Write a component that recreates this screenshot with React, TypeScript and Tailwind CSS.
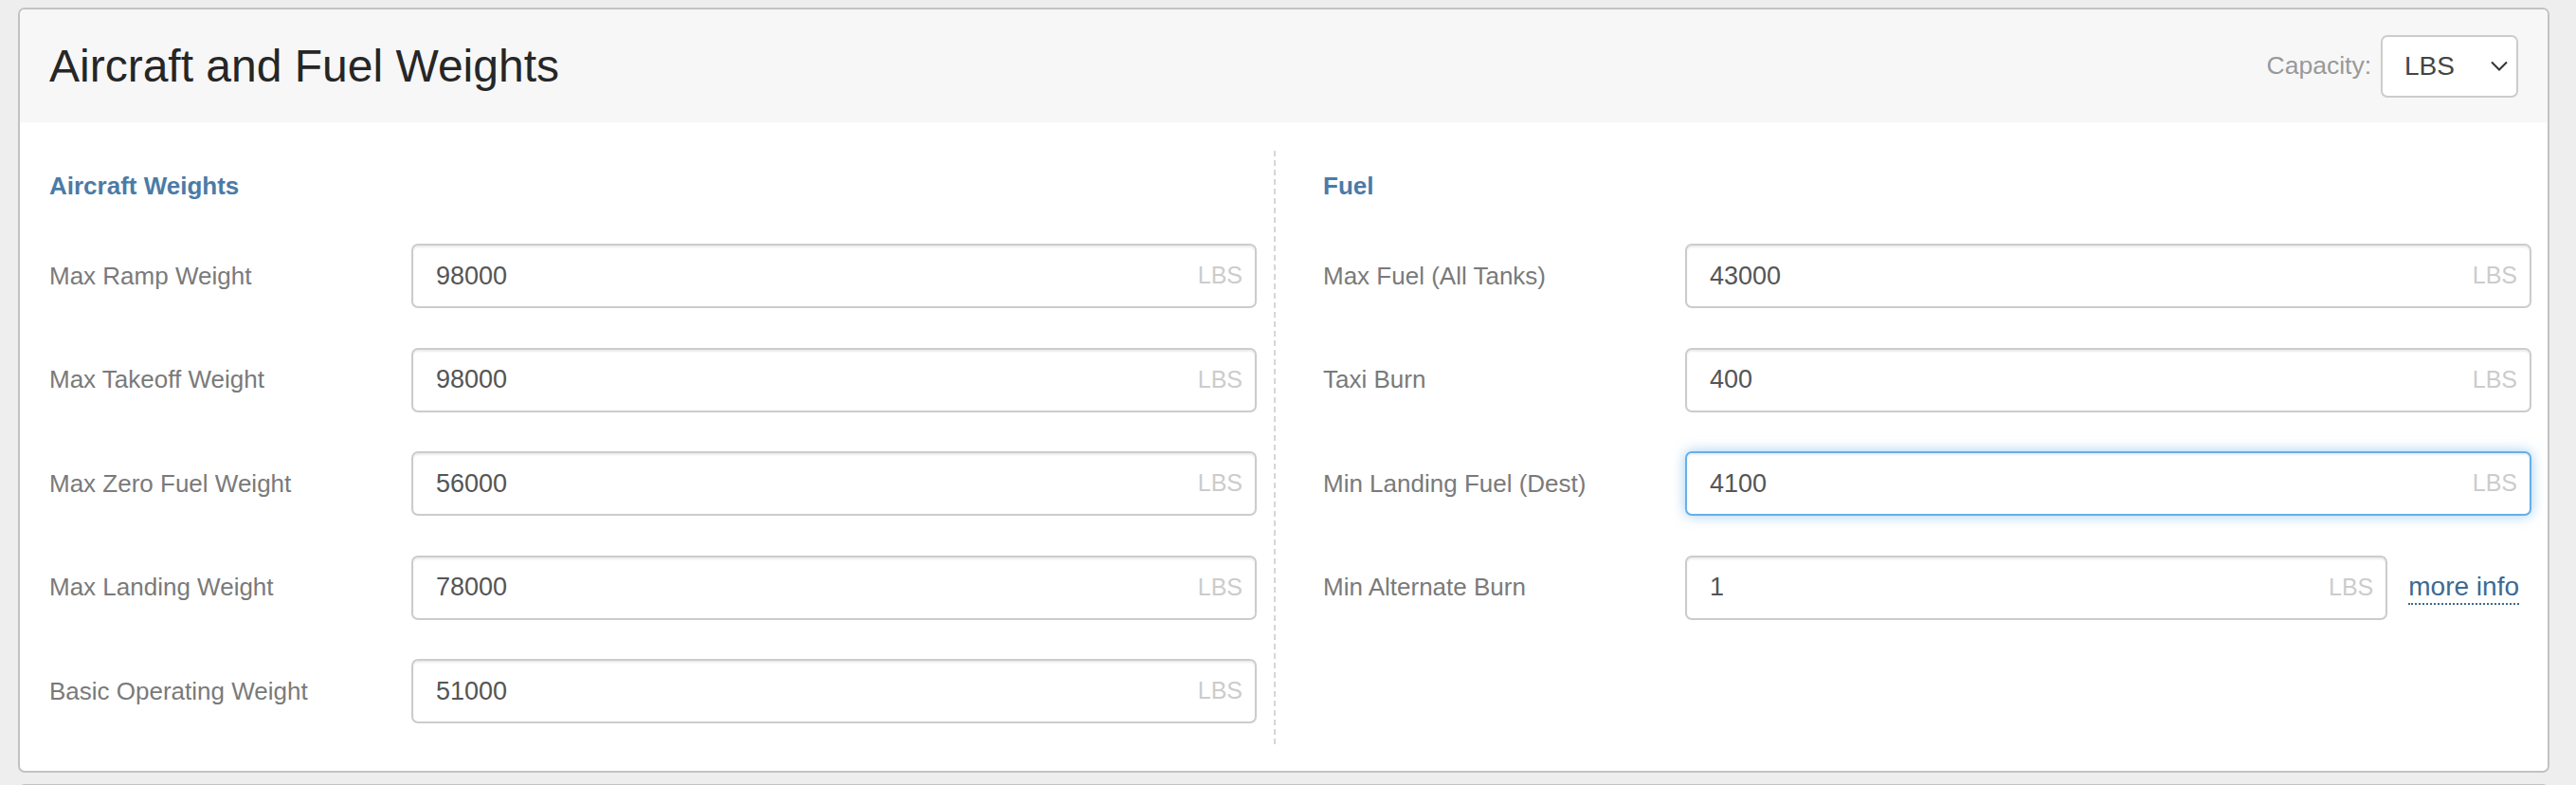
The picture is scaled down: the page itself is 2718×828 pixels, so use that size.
const sans = "font-['Liberation_Sans',Arial,sans-serif]";

const aircraftRows = [
  { label: 'Max Ramp Weight', value: '98000' },
  { label: 'Max Takeoff Weight', value: '98000' },
  { label: 'Max Zero Fuel Weight', value: '56000' },
  { label: 'Max Landing Weight', value: '78000' },
  { label: 'Basic Operating Weight', value: '51000' },
];

const fuelRows = [
  { label: 'Max Fuel (All Tanks)', value: '43000' },
  { label: 'Taxi Burn', value: '400' },
  { label: 'Min Landing Fuel (Dest)', value: '4100', focused: true },
  { label: 'Min Alternate Burn', value: '1', moreInfo: true },
];

type Row = { label: string; value: string; focused?: boolean; moreInfo?: boolean };

function WeightInput({ value, focused }: { value: string; focused?: boolean }) {
  return (
    <div
      className={
        focused
          ? 'flex h-[68px] flex-1 items-center rounded-[7px] border-2 border-[#66afe9] bg-white pr-[13px] pl-[24px] shadow-[inset_0_2px_2px_rgba(0,0,0,0.075),0_0_14px_rgba(102,175,233,0.6)]'
          : 'flex h-[68px] flex-1 items-center rounded-[7px] border-2 border-[#cccccc] bg-white pr-[13px] pl-[24px] shadow-[inset_0_2px_2px_rgba(0,0,0,0.075)]'
      }
    >
      <input
        defaultValue={value}
        className={`${sans} w-full min-w-0 flex-1 bg-transparent text-[27px] text-[#555555] outline-none`}
      />
      <span className={`${sans} text-[25px] text-[#cccccc]`}>LBS</span>
    </div>
  );
}

function Section({ title, rows }: { title: string; rows: Row[] }) {
  return (
    <div className="pb-[22px]">
      <div className="flex h-[75px] items-center">
        <h3 className={`${sans} text-[26px] font-bold text-[#4b7ba6]`}>{title}</h3>
      </div>
      <div className="mt-[23px] flex flex-col gap-[41.5px]">
        {rows.map((row) => (
          <div key={row.label} className="flex items-center">
            <label className={`${sans} w-[382px] shrink-0 text-[26px] text-[#7a7a7a]`}>
              {row.label}
            </label>
            <WeightInput value={row.value} focused={row.focused} />
            {row.moreInfo && (
              <a
                href="#"
                className={`${sans} mr-[13px] ml-[22px] border-b-2 border-dotted border-[#3b6a93] text-[28px] leading-[34px] text-[#3b6a93]`}
              >
                more info
              </a>
            )}
          </div>
        ))}
      </div>
    </div>
  );
}

export default function App() {
  return (
    <div className="min-h-screen bg-[#eeeeee] pt-[8px] pr-[28px] pl-[19px]">
      <div className="overflow-hidden rounded-[7px] border-2 border-[#c2c2c2] bg-white">
        <div className="flex h-[119px] items-center justify-between bg-[#f7f7f7] pr-[31px] pl-[31px]">
          <h2 className={`${sans} text-[48px] text-[#262626]`}>Aircraft and Fuel Weights</h2>
          <div className="flex items-center gap-[10px]">
            <span className={`${sans} text-[26.5px] text-[#999999]`}>Capacity:</span>
            <div className="flex h-[66px] w-[145px] items-center justify-between rounded-[7px] border-2 border-[#cccccc] bg-white pr-[9px] pl-[23px]">
              <span className={`${sans} text-[28px] text-[#444444]`}>LBS</span>
              <svg width="18" height="11" viewBox="0 0 18 11" fill="none">
                <polyline points="1,1.5 9,9.5 17,1.5" stroke="#333333" strokeWidth="2" />
              </svg>
            </div>
          </div>
        </div>
        <div className="flex pt-[30px] pr-[17px] pb-[28px] pl-[31px]">
          <div className="mr-[18px] w-[1274px] shrink-0">
            <Section title="Aircraft Weights" rows={aircraftRows} />
          </div>
          <div className="flex-1 border-l-2 border-dashed border-[#d6d6d6] pl-[50px]">
            <Section title="Fuel" rows={fuelRows} />
          </div>
        </div>
      </div>
      <div className="mt-[12px] h-[40px] rounded-t-[7px] border-2 border-[#c2c2c2] bg-[#f7f7f7]" />
    </div>
  );
}
